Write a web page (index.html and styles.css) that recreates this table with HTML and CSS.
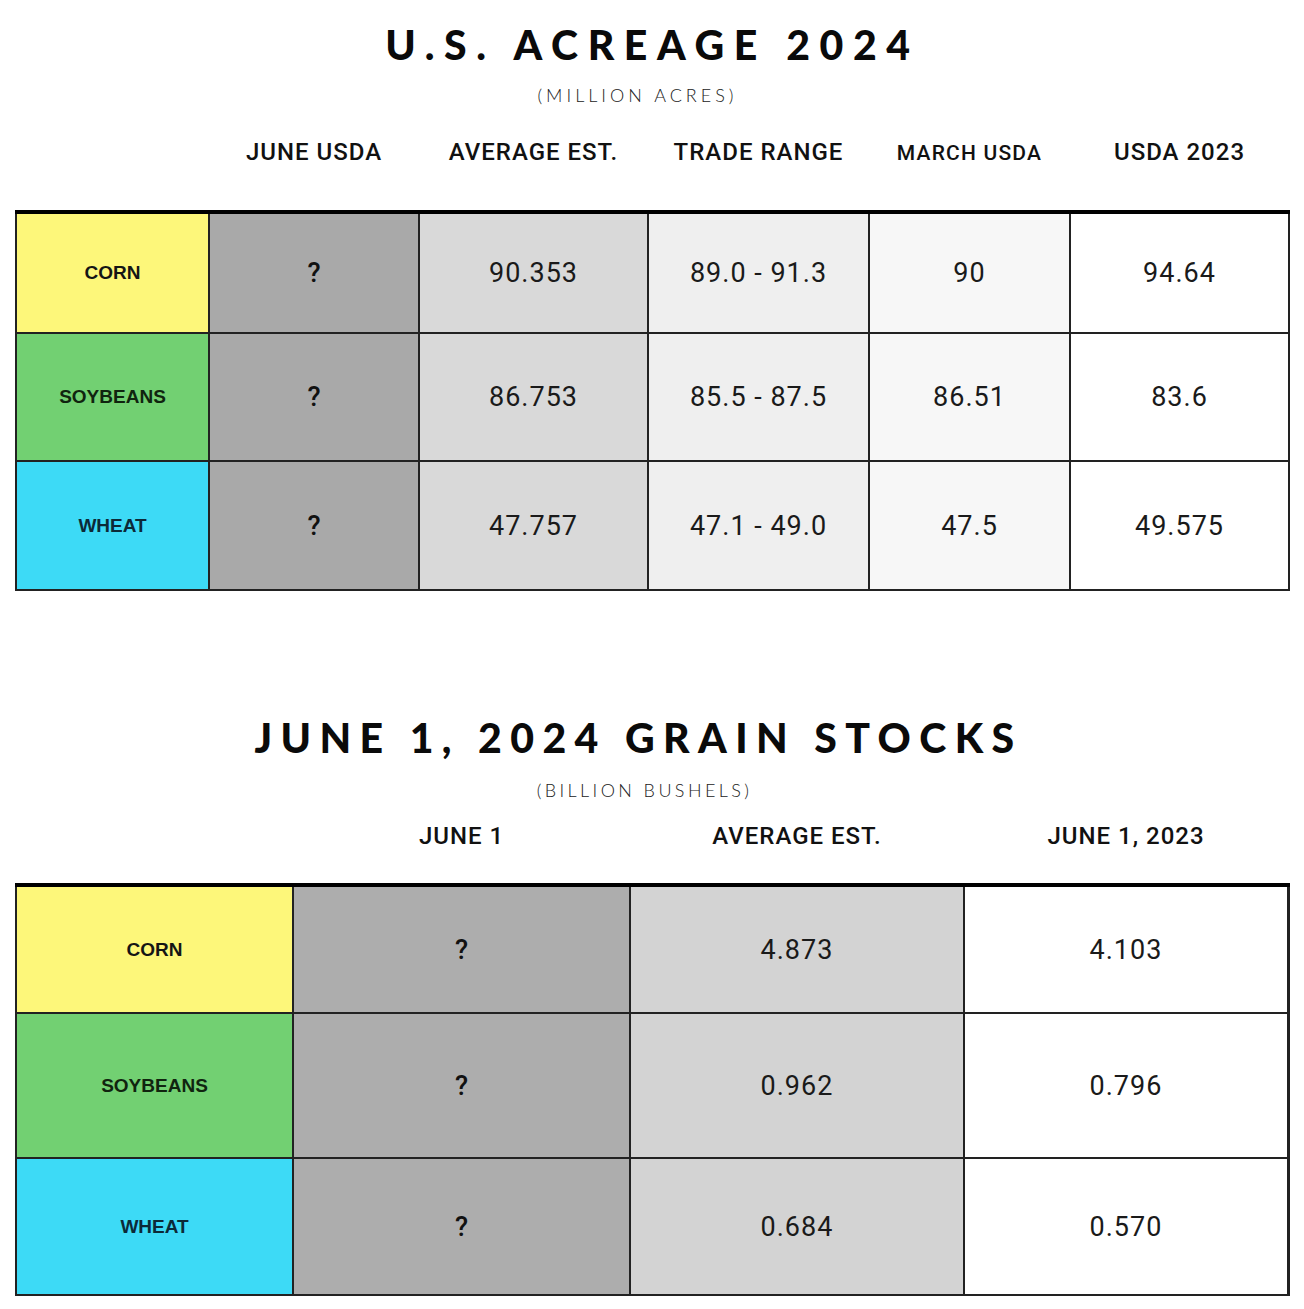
FILE: index.html
```html
<!DOCTYPE html>
<html lang="en">
<head>
<meta charset="utf-8">
<title>U.S. Acreage 2024 / June 1, 2024 Grain Stocks</title>
<link rel="stylesheet" href="styles.css">
</head>
<body>
<main class="page">
  <section class="report report-acreage">
    <h1 class="title title-acreage">U.S. ACREAGE 2024</h1>
    <p class="subtitle subtitle-acreage">(MILLION ACRES)</p>
    <div class="heads grid-acreage">
      <div class="head"></div>
      <div class="head">JUNE USDA</div>
      <div class="head">AVERAGE EST.</div>
      <div class="head">TRADE RANGE</div>
      <div class="head"><span class="head-small">MARCH USDA</span></div>
      <div class="head">USDA 2023</div>
    </div>
    <div class="table grid-acreage acreage-rows">
      <div class="cell crop corn">CORN</div>
      <div class="cell q shade-a1">?</div>
      <div class="cell val shade-a2">90.353</div>
      <div class="cell val shade-a3">89.0 - 91.3</div>
      <div class="cell val shade-a4">90</div>
      <div class="cell val shade-a5">94.64</div>

      <div class="cell crop soy">SOYBEANS</div>
      <div class="cell q shade-a1">?</div>
      <div class="cell val shade-a2">86.753</div>
      <div class="cell val shade-a3">85.5 - 87.5</div>
      <div class="cell val shade-a4">86.51</div>
      <div class="cell val shade-a5">83.6</div>

      <div class="cell crop wheat">WHEAT</div>
      <div class="cell q shade-a1">?</div>
      <div class="cell val shade-a2">47.757</div>
      <div class="cell val shade-a3">47.1 - 49.0</div>
      <div class="cell val shade-a4">47.5</div>
      <div class="cell val shade-a5">49.575</div>
    </div>
  </section>

  <section class="report report-stocks">
    <h1 class="title title-stocks">JUNE 1, 2024 GRAIN STOCKS</h1>
    <p class="subtitle subtitle-stocks">(BILLION BUSHELS)</p>
    <div class="heads grid-stocks">
      <div class="head"></div>
      <div class="head">JUNE 1</div>
      <div class="head">AVERAGE EST.</div>
      <div class="head">JUNE 1, 2023</div>
    </div>
    <div class="table grid-stocks stocks-rows">
      <div class="cell crop corn">CORN</div>
      <div class="cell q shade-s1">?</div>
      <div class="cell val shade-s2">4.873</div>
      <div class="cell val shade-s3">4.103</div>

      <div class="cell crop soy">SOYBEANS</div>
      <div class="cell q shade-s1">?</div>
      <div class="cell val shade-s2">0.962</div>
      <div class="cell val shade-s3">0.796</div>

      <div class="cell crop wheat">WHEAT</div>
      <div class="cell q shade-s1">?</div>
      <div class="cell val shade-s2">0.684</div>
      <div class="cell val shade-s3">0.570</div>
    </div>
  </section>
</main>
</body>
</html>
```

FILE: styles.css
```css
html, body {
  margin: 0;
  padding: 0;
  background: #ffffff;
}

body {
  color: #111111;
  font-family: "Roboto", "Liberation Sans", Arial, sans-serif;
}

.page {
  width: 1304px;
  padding: 20px 0 0 15px;
  box-sizing: border-box;
}

.report {
  width: 1275px;
}

.report-stocks {
  margin-top: 122px;
}

.title {
  margin: 0;
  font-family: "Lato", "Open Sans", sans-serif;
  font-weight: 900;
  font-size: 41px;
  line-height: 50px;
  text-align: center;
  color: #0a0a0a;
}

.title-acreage {
  letter-spacing: 9.6px;
  padding-left: 10px;
  padding-right: 10px;
}

.title-stocks {
  letter-spacing: 8.4px;
  padding-left: 8px;
  padding-right: 36px;
}

.subtitle {
  margin: 13px 0 0;
  font-family: "Lato", "Open Sans", sans-serif;
  font-weight: 300;
  font-size: 18px;
  line-height: 24px;
  letter-spacing: 4px;
  text-align: center;
  color: #222222;
}

.subtitle-acreage {
  padding-right: 30px;
}

.subtitle-stocks {
  margin-top: 15px;
  letter-spacing: 3.4px;
  padding-right: 16px;
}

.heads {
  margin-top: 30px;
}

.report-stocks .heads {
  margin-top: 19px;
}

.head {
  font-family: "Roboto", sans-serif;
  font-weight: 500;
  font-size: 24px;
  line-height: 30px;
  letter-spacing: 1px;
  text-align: center;
  color: #111111;
  white-space: nowrap;
}

.head-small {
  font-size: 21px;
  letter-spacing: 1.2px;
}

.grid-acreage {
  display: grid;
  grid-template-columns: 191px 208px 227px 219px 199px 217px;
  column-gap: 2px;
  padding: 0 2px;
}

.grid-stocks {
  display: grid;
  grid-template-columns: 275px 335px 332px 322px;
  column-gap: 2px;
  padding: 0 2px;
}

.table {
  background: #222222;
  border-top: 4px solid #000000;
  padding-bottom: 2px;
  row-gap: 2px;
  margin-top: 42px;
}

.report-stocks .table {
  margin-top: 32px;
}

.acreage-rows {
  grid-template-rows: 118px 126px 127px;
}

.stocks-rows {
  grid-template-rows: 125px 143px 135px;
}

.cell {
  display: flex;
  align-items: center;
  justify-content: center;
  text-align: center;
}

.crop {
  font-family: "Liberation Sans", Arial, sans-serif;
  font-weight: 700;
  font-size: 19px;
  color: #151515;
}

.corn { background: #fdf77a; }
.soy { background: #72d072; color: #10240f; }
.wheat { background: #3ddaf6; color: #0c2a38; }

.q {
  font-family: "Roboto", sans-serif;
  font-weight: 500;
  font-size: 27px;
  color: #111111;
}

.val {
  font-family: "Roboto", sans-serif;
  font-weight: 400;
  font-size: 27px;
  letter-spacing: 1px;
  color: #1a1a1a;
}

.shade-a1 { background: #a9a9a9; }
.shade-a2 { background: #d9d9d9; }
.shade-a3 { background: #efefef; }
.shade-a4 { background: #f7f7f7; }
.shade-a5 { background: #ffffff; }

.shade-s1 { background: #adadad; }
.shade-s2 { background: #d3d3d3; }
.shade-s3 { background: #ffffff; }
```
